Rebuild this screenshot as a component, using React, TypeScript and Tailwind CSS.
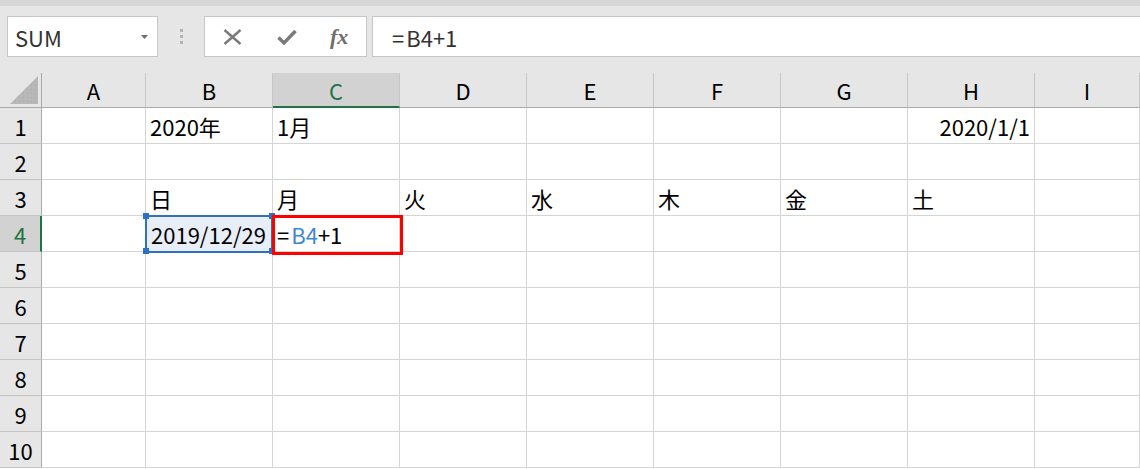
import React from "react";

const cols = ["A", "B", "C", "D", "E", "F", "G", "H", "I"];
const rows = [1, 2, 3, 4, 5, 6, 7, 8, 9, 10];

const cells: Record<string, string> = {
  B1: "2020年",
  C1: "1月",
  H1: "2020/1/1",
  B3: "日",
  C3: "月",
  D3: "火",
  E3: "水",
  F3: "木",
  G3: "金",
  H3: "土",
  B4: "2019/12/29",
};

function Handle({ className }: { className: string }) {
  return <div className={`absolute w-[6px] h-[6px] bg-[#2f6fc4] ${className}`} />;
}

function Cell({ col, row }: { col: string; row: number }) {
  const key = `${col}${row}`;
  const value = cells[key];
  const isRight = key === "H1";

  if (key === "B4") {
    return (
      <div className="relative flex items-center bg-[#e8eef8] border-r border-b border-[#d4d4d4] pl-[5px] whitespace-nowrap">
        {value}
        <div className="absolute -left-px -top-px w-[128px] h-[38px] border-2 border-[#2f6fc4]" />
        <Handle className="-left-[3px] -top-[3px]" />
        <Handle className="-left-[3px] -bottom-[3px]" />
        <Handle className="-right-[3px] -top-[3px]" />
        <Handle className="-right-[3px] -bottom-[3px]" />
      </div>
    );
  }

  if (key === "C4") {
    return (
      <div className="relative z-10 flex items-center border-r border-b border-[#d4d4d4] pl-[4px] whitespace-nowrap">
        <span className="mr-[2px]">=</span>
        <span className="text-[#3c87d6]">B4</span>
        <span>+1</span>
        <div className="absolute -left-px -top-px w-[131px] h-[40px] border-[3px] border-[#ff0000]" />
      </div>
    );
  }

  return (
    <div
      className={`flex items-center border-r border-b border-[#d4d4d4] whitespace-nowrap ${
        isRight ? "justify-end pr-[4px]" : "pl-[4px]"
      }`}
    >
      {value}
    </div>
  );
}

export default function App() {
  return (
    <div className="w-[1140px] h-[469px] overflow-hidden bg-white text-black font-['Noto_Sans_CJK_JP','Noto_Sans',sans-serif] text-[22px] leading-none">
      {/* top: name box + formula bar */}
      <div className="h-[73px] bg-[#e6e6e6] flex flex-col">
        <div className="h-[6px] bg-[#d6d6d6]" />
        <div className="flex items-start pt-[10px] pl-[7px]">
          <div className="w-[151px] h-[41px] bg-white border border-[#c6c6c6] flex items-center justify-between pl-[7px] pr-[9px] text-[#333]">
            <span>SUM</span>
            <svg width="7" height="4" viewBox="0 0 7 4">
              <path d="M0 0h7L3.5 4z" fill="#6e6e6e" />
            </svg>
          </div>
          <div className="w-[46px] h-[41px] flex flex-col items-center justify-center gap-[3px]">
            <div className="w-[3px] h-[3px] bg-[#b4b4b4]" />
            <div className="w-[3px] h-[3px] bg-[#b4b4b4]" />
            <div className="w-[3px] h-[3px] bg-[#b4b4b4]" />
          </div>
          <div className="w-[163px] h-[41px] bg-white border border-[#c6c6c6] flex items-center pl-[18px] gap-[35px]">
            <svg width="19" height="16" viewBox="0 0 19 16">
              <path d="M1.5 1l16 14M17.5 1l-16 14" stroke="#7a7a7a" strokeWidth="2.4" />
            </svg>
            <svg width="20" height="16" viewBox="0 0 20 16">
              <path d="M1.5 8.5l5.5 5.5L18.5 2" stroke="#7a7a7a" strokeWidth="3.4" fill="none" />
            </svg>
            <span className="font-['Liberation_Serif',serif] italic font-bold text-[22px] text-[#6e6e6e] -ml-[2px]">
              fx
            </span>
          </div>
          <div className="ml-[5px] flex-1 h-[41px] bg-white border border-[#c6c6c6] border-r-0 flex items-center pl-[19px] text-[#333]">
            <span className="mr-[2px]">=</span>B4+1
          </div>
        </div>
      </div>

      {/* sheet grid */}
      <div className="grid grid-cols-[42px_104px_repeat(7,127px)_105px] grid-rows-[35px_repeat(10,36px)]">
        {/* corner */}
        <div className="bg-[#e6e6e6] border-r border-b border-[#a9a9a9] flex items-end justify-end pr-[3px] pb-[3px]">
          <svg width="28" height="28" viewBox="0 0 28 28">
            <defs>
              <pattern id="dots" width="4" height="4" patternUnits="userSpaceOnUse">
                <rect width="4" height="4" fill="#b8b8b8" />
                <rect x="1" y="1" width="1" height="1" fill="#a8a8a8" />
              </pattern>
            </defs>
            <path d="M0 28L28 0v28z" fill="url(#dots)" />
          </svg>
        </div>
        {cols.map((c) => (
          <div
            key={c}
            className={`flex items-center justify-center ${
              c === "C"
                ? "bg-[#d2d2d2] text-[#217346] border-b-2 border-b-[#217346] border-r border-r-[#c6c6c6]"
                : "bg-[#e6e6e6] border-b border-b-[#a9a9a9] border-r border-r-[#c6c6c6]"
            }`}
          >
            {c}
          </div>
        ))}
        {rows.map((r) => (
          <React.Fragment key={r}>
            <div
              className={`flex items-center justify-center border-b border-[#c4c4c4] ${
                r === 4
                  ? "bg-[#d2d2d2] text-[#217346] border-r-2 border-r-[#217346]"
                  : "bg-[#e6e6e6] border-r border-r-[#a9a9a9]"
              }`}
            >
              {r}
            </div>
            {cols.map((c) => (
              <Cell key={c} col={c} row={r} />
            ))}
          </React.Fragment>
        ))}
      </div>
    </div>
  );
}
